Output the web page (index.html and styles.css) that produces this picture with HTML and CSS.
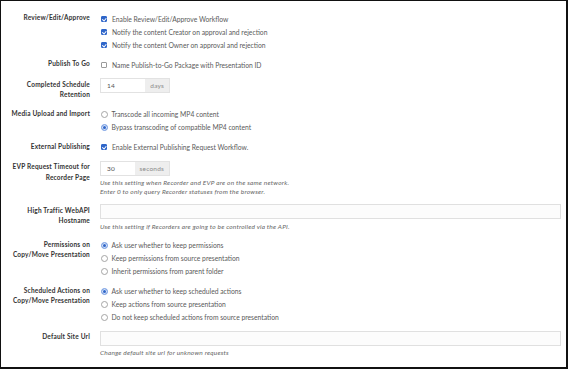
FILE: index.html
```html
<!DOCTYPE html>
<html lang="en">
<head>
  <meta charset="UTF-8" />
  <meta name="viewport" content="width=device-width, initial-scale=1.0" />
  <title>Presentation Settings</title>
  <link rel="stylesheet" href="styles.css">
</head>
<body>
  <div class="frame">
    <form class="settings">

      <div class="row">
        <div class="label">Review/Edit/Approve</div>
        <div class="field">
          <div class="opt"><span class="box on"></span>Enable Review/Edit/Approve Workflow</div>
          <div class="opt"><span class="box on"></span>Notify the content Creator on approval and rejection</div>
          <div class="opt"><span class="box on"></span>Notify the content Owner on approval and rejection</div>
        </div>
      </div>

      <div class="row">
        <div class="label">Publish To Go</div>
        <div class="field">
          <div class="opt"><span class="box"></span>Name Publish-to-Go Package with Presentation ID</div>
        </div>
      </div>

      <div class="row">
        <div class="label input-label">Completed Schedule<br>Retention</div>
        <div class="field">
          <div class="group">
            <span class="value">14</span>
            <span class="addon">days</span>
          </div>
        </div>
      </div>

      <div class="row">
        <div class="label">Media Upload and Import</div>
        <div class="field">
          <div class="opt"><span class="radio"></span>Transcode all incoming MP4 content</div>
          <div class="opt"><span class="radio on"></span>Bypass transcoding of compatible MP4 content</div>
        </div>
      </div>

      <div class="row">
        <div class="label">External Publishing</div>
        <div class="field">
          <div class="opt"><span class="box on"></span>Enable External Publishing Request Workflow.</div>
        </div>
      </div>

      <div class="row">
        <div class="label input-label">EVP Request Timeout for<br>Recorder Page</div>
        <div class="field">
          <div class="group">
            <span class="value">30</span>
            <span class="addon">seconds</span>
          </div>
          <p class="help">Use this setting when Recorder and EVP are on the same network.<br>Enter 0 to only query Recorder statuses from the browser.</p>
        </div>
      </div>

      <div class="row">
        <div class="label input-label">High Traffic WebAPI<br>Hostname</div>
        <div class="field">
          <div class="text-input"></div>
          <p class="help">Use this setting if Recorders are going to be controlled via the API.</p>
        </div>
      </div>

      <div class="row">
        <div class="label">Permissions on<br>Copy/Move Presentation</div>
        <div class="field">
          <div class="opt"><span class="radio on"></span>Ask user whether to keep permissions</div>
          <div class="opt"><span class="radio"></span>Keep permissions from source presentation</div>
          <div class="opt"><span class="radio"></span>Inherit permissions from parent folder</div>
        </div>
      </div>

      <div class="row">
        <div class="label">Scheduled Actions on<br>Copy/Move Presentation</div>
        <div class="field">
          <div class="opt"><span class="radio on"></span>Ask user whether to keep scheduled actions</div>
          <div class="opt"><span class="radio"></span>Keep actions from source presentation</div>
          <div class="opt"><span class="radio"></span>Do not keep scheduled actions from source presentation</div>
        </div>
      </div>

      <div class="row">
        <div class="label input-label">Default Site Url</div>
        <div class="field">
          <div class="text-input"></div>
          <p class="help">Change default site url for unknown requests</p>
        </div>
      </div>

    </form>
  </div>
</body>
</html>
```

FILE: styles.css
```css
body {
  margin: 0;
  font-family: Lato, "Open Sans", sans-serif;
  background-color: white;
}
.frame {
  box-sizing: border-box;
  width: 568px;
  height: 369px;
  border-top: 1px solid #111;
  border-left: 1px solid #111;
  border-right: 2px solid #111;
  border-bottom: 2px solid #111;
  background-color: white;
  overflow: hidden;
}
.settings {
  padding: 11px 5px 0 0;
}
.row {
  display: grid;
  grid-template-columns: 89px 1fr;
  column-gap: 10px;
  margin-bottom: 7px;
}
.label {
  text-align: right;
  font-size: 6.5px;
  font-weight: bold;
  letter-spacing: 0.2px;
  color: #333;
  line-height: 10.5px;
  padding-top: 1px;
}
.input-label {
  padding-top: 1.5px;
}
.opt {
  display: flex;
  align-items: center;
  height: 13px;
  font-size: 6.75px;
  color: #5a5a5a;
}
.box, .radio {
  box-sizing: border-box;
  flex: none;
  width: 6px;
  height: 6px;
  margin: 0 5px 0 1px;
  border: 1px solid #9a9a9a;
  background-color: white;
  position: relative;
}
.box {
  border-radius: 1px;
}
.box.on {
  border-color: #2f66c9;
  background-color: #2f66c9;
}
.box.on::after {
  content: "";
  position: absolute;
  left: 1px;
  top: 0;
  width: 1.5px;
  height: 2.5px;
  border-right: 1px solid white;
  border-bottom: 1px solid white;
  transform: rotate(40deg);
}
.radio {
  width: 7px;
  height: 7px;
  margin: 0 4px 0 0.5px;
  border-radius: 50%;
  border-color: #a5a5a5;
}
.radio.on {
  border-color: #8fb0ea;
  background-color: #2f66c9;
  box-shadow: inset 0 0 0 1px #dce6f8;
}
.group {
  display: flex;
  width: 70px;
  height: 15px;
  box-sizing: border-box;
  border: 1px solid #e2e2e2;
  font-size: 6.5px;
  letter-spacing: 0.2px;
}
.value {
  flex: 1;
  padding-left: 6px;
  line-height: 13px;
  color: #555;
}
.addon {
  padding: 0 5px;
  line-height: 13px;
  background-color: #eeeeee;
  color: #8a8a8a;
}
.text-input {
  box-sizing: border-box;
  height: 15px;
  border: 1px solid #e0e0e0;
  background-color: #fcfcfc;
}
.help {
  margin: 2.5px 0 1px;
  font-size: 6.5px;
  font-style: italic;
  letter-spacing: 0.2px;
  line-height: 9px;
  color: #666;
}
```
